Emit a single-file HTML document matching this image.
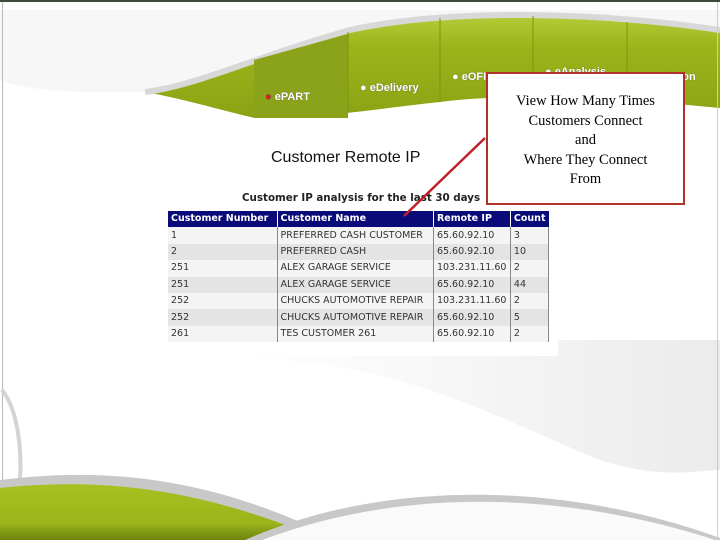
<!DOCTYPE html>
<html><head><meta charset="utf-8"><style>
body{margin:0;width:720px;height:540px;overflow:hidden;position:relative;background:#fff;font-family:"Liberation Sans",sans-serif}
.abs{position:absolute}
table{border-collapse:collapse;font-family:"DejaVu Sans","Liberation Sans",sans-serif;font-size:9.5px;color:#333}
td,th{height:16.4px;padding:0 3px;border-right:1px solid #888;text-align:left;white-space:nowrap;line-height:16px}
th{background:#0a0a78;color:#fff;font-weight:bold;border-right:1px solid #fff}
tr:nth-child(even) td{background:#f4f4f4}
tr:nth-child(odd) td{background:#e4e4e4}
.tab{position:absolute;color:#fff;font-size:11px;font-weight:bold;text-shadow:0 0 1px #556}
</style></head><body>
<svg class="abs" style="left:0;top:0" width="720" height="540">
<defs>
<linearGradient id="gr" x1="0" y1="0" x2="1" y2="0"><stop offset="0" stop-color="#fff"/><stop offset="1" stop-color="#ebebeb"/></linearGradient>
<linearGradient id="gg" x1="0" y1="0" x2="0" y2="1"><stop offset="0" stop-color="#b6cc3a"/><stop offset="0.3" stop-color="#9cb51a"/><stop offset="1" stop-color="#8aa314"/></linearGradient>
<linearGradient id="gb" x1="0" y1="0" x2="0" y2="1"><stop offset="0" stop-color="#a8c020"/><stop offset="0.7" stop-color="#9ab51a"/><stop offset="1" stop-color="#6e8210"/></linearGradient>
</defs>
<rect x="0" y="0" width="720" height="540" fill="#fff"/>
<path d="M250 360 C400 360 500 420 600 460 C660 480 700 470 720 470 L720 340 L250 340Z" fill="url(#gr)"/>
<path d="M0 10 L720 10 L720 40 C600 10 450 10 350 30 C260 50 200 90 140 92 C80 94 20 90 0 80Z" fill="#f7f7f7"/>
<path d="M145 92 C200 85 260 55 350 30 C450 8 600 12 720 30 L720 108 C620 98 520 92 440 102 C380 108 330 118 255 118 C220 110 180 98 145 92Z" fill="url(#gg)"/>
<path d="M145 92 C200 85 260 55 350 30 C450 8 600 12 720 30" fill="none" stroke="#d8d8d8" stroke-width="6"/>
<path d="M254 60 L348 34 L348 118 L254 118Z" fill="#8aa31a"/>
<path d="M348 32 L348 112 M440 18 L440 102 M533 16 L533 98 M627 22 L627 100" stroke="#7d9412" stroke-width="1"/>
<rect x="0" y="0" width="720" height="2" fill="#3d4a3d"/>
<rect x="2" y="2" width="1" height="538" fill="#bbb"/>
<rect x="717" y="2" width="1" height="538" fill="#ccc"/>
<path d="M2 390 C18 410 22 450 20 480" fill="none" stroke="#d4d4d4" stroke-width="4"/>
<path d="M0 480 C80 470 180 470 300 522 L290 540 L0 540Z" fill="#c8c8c8"/>
<path d="M0 488 C80 480 170 482 285 525 L265 540 L0 540Z" fill="url(#gb)"/>
<path d="M245 540 C380 480 560 480 720 538 L720 540Z" fill="#c8c8c8"/>
<path d="M262 540 C400 488 560 490 715 540Z" fill="#fafafa"/>
<rect x="160" y="182" width="398" height="174" fill="#fff"/>
</svg>
<div class="tab" style="left:265px;top:91px"><span style="color:#c22">●</span> ePART</div>
<div class="tab" style="left:360px;top:82px">● eDelivery</div>
<div class="tab" style="left:452px;top:71px">● eOFI</div>
<div class="tab" style="left:545px;top:66px">● eAnalysis</div>
<div class="tab" style="left:670px;top:71px">ision</div>
<div class="abs" style="left:271px;top:149px;font-size:16px;color:#111">Customer Remote IP</div>
<div class="abs" style="left:242px;top:192px;font-size:10.3px;font-weight:bold;color:#222;font-family:'DejaVu Sans',sans-serif">Customer IP analysis for the last 30 days</div>
<table class="abs" style="left:168px;top:211px;width:381px">
<tr><th style="width:103px">Customer Number</th><th style="width:150px">Customer Name</th><th style="width:70px">Remote IP</th><th style="border-right:0">Count</th></tr>
<tr><td>1</td><td>PREFERRED CASH CUSTOMER</td><td>65.60.92.10</td><td>3</td></tr>
<tr><td>2</td><td>PREFERRED CASH</td><td>65.60.92.10</td><td>10</td></tr>
<tr><td>251</td><td>ALEX GARAGE SERVICE</td><td>103.231.11.60</td><td>2</td></tr>
<tr><td>251</td><td>ALEX GARAGE SERVICE</td><td>65.60.92.10</td><td>44</td></tr>
<tr><td>252</td><td>CHUCKS AUTOMOTIVE REPAIR</td><td>103.231.11.60</td><td>2</td></tr>
<tr><td>252</td><td>CHUCKS AUTOMOTIVE REPAIR</td><td>65.60.92.10</td><td>5</td></tr>
<tr><td>261</td><td>TES CUSTOMER 261</td><td>65.60.92.10</td><td>2</td></tr>
</table>
<div class="abs" style="left:486px;top:72px;width:195px;border:2px solid #b0302a;background:#fff;text-align:center;font-family:'Liberation Serif',serif;font-size:14.5px;line-height:19.5px;padding-top:18px;height:111px">View How Many Times<br>Customers Connect<br>and<br>Where They Connect<br>From</div>
<svg class="abs" style="left:0;top:0" width="720" height="540"><line x1="404" y1="216" x2="485" y2="138" stroke="#c0202a" stroke-width="2.5"/></svg>
</body></html>
